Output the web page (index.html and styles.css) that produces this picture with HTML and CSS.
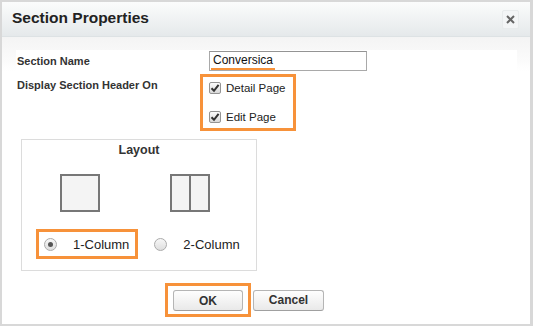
FILE: index.html
```html
<!DOCTYPE html>
<html lang="en">
<head>
    <meta charset="UTF-8">
    <title>Section Properties</title>
    <link rel="stylesheet" href="styles.css">
</head>
<body>
<div class="dialog">
    <div class="dialog-head">
        <h1>Section Properties</h1>
        <div class="close">
            <svg width="9" height="9" viewBox="0 0 9 9"><path d="M1 1L8 8M8 1L1 8" stroke="#666" stroke-width="2"/></svg>
        </div>
    </div>
    <div class="dialog-body">
        <div class="panel">
            <div class="form-row">
                <div class="field-label">Section Name</div>
                <div class="name-box"><span class="name-text">Conversica</span></div>
            </div>
            <div class="form-row second">
                <div class="field-label">Display Section Header On</div>
                <div class="hilite checks">
                    <div class="check-line"><span class="check"><svg width="10" height="10" viewBox="0 0 10 10"><path d="M1.5 5.2L4 7.8L8.6 1.8" stroke="#333" stroke-width="2" fill="none"/></svg></span>Detail Page</div>
                    <div class="check-line"><span class="check"><svg width="10" height="10" viewBox="0 0 10 10"><path d="M1.5 5.2L4 7.8L8.6 1.8" stroke="#333" stroke-width="2" fill="none"/></svg></span>Edit Page</div>
                </div>
            </div>
            <div class="layout-box">
                <div class="layout-title">Layout</div>
                <div class="layout-icons">
                    <div class="col-icon"></div>
                    <div class="col-icon two"><span></span><span></span></div>
                </div>
                <div class="layout-radios">
                    <div class="radio-opt hilite"><span class="radio on"></span>1-Column</div>
                    <div class="radio-opt plain"><span class="radio"></span>2-Column</div>
                </div>
            </div>
            <div class="buttons">
                <div class="hilite ok-wrap"><button class="btn">OK</button></div>
                <button class="btn">Cancel</button>
            </div>
        </div>
    </div>
</div>
</body>
</html>
```

FILE: styles.css
```css
* {
    box-sizing: border-box;
    margin: 0;
    padding: 0;
}

body {
    background: #fff;
    font-family: "Liberation Sans", Arial, sans-serif;
    color: #333;
}

.dialog {
    width: 533px;
    height: 326px;
    border: 2px solid #d8d8d8;
    border-right-width: 3px;
    display: flex;
    flex-direction: column;
}

.dialog-head {
    height: 35px;
    display: flex;
    align-items: center;
    justify-content: space-between;
    padding: 0 11px 3px 10px;
    background: linear-gradient(#fbfcfc, #e5e9eb);
    border-bottom: 1px solid #dde2e4;
}

.dialog-head h1 {
    font-size: 15.5px;
    font-weight: bold;
    color: #222;
}

.close {
    width: 17px;
    height: 19px;
    margin-top: 3px;
    display: flex;
    align-items: center;
    justify-content: center;
    background: #f3f5f6;
    border: 1px solid #e8ebec;
    border-radius: 2px;
}

.dialog-body {
    flex: 1;
    background: linear-gradient(#f4f4f4, #fbfbfb 24px, #fff 34px);
    padding: 13px 13px 0 14px;
}

.panel {
    background: #fff;
    height: 100%;
    padding-top: 1px;
}

.form-row {
    display: grid;
    grid-template-columns: 193px auto;
    align-items: center;
}

.form-row.second {
    margin-top: 3px;
    align-items: start;
}

.field-label {
    font-size: 11px;
    font-weight: bold;
    line-height: 20px;
    padding-left: 1px;
    color: #333;
}

.second .field-label {
    padding-top: 1px;
}

.name-box {
    width: 158px;
    height: 20px;
    border: 1px solid #a9a9a9;
    border-top-color: #949494;
    padding-left: 3px;
    font-size: 12px;
    color: #111;
}

.name-text {
    display: inline-block;
    line-height: 15px;
    padding: 1px 2px 0 2px;
    margin-left: -2px;
    border-bottom: 2px solid #f7923a;
}

.hilite {
    border: 3px solid #f7923a;
}

.checks {
    width: 96px;
    margin-left: -9px;
    padding-left: 6px;
    display: flex;
    flex-direction: column;
    gap: 7px;
}

.check-line {
    display: flex;
    align-items: center;
    height: 22px;
    font-size: 11.5px;
    color: #222;
}

.check {
    width: 12px;
    height: 12px;
    margin-right: 5px;
    border: 1px solid #949494;
    border-radius: 2px;
    background: linear-gradient(#fcfcfc, #d9d9d9);
    display: flex;
    align-items: center;
    justify-content: center;
}

.layout-box {
    width: 236px;
    height: 132px;
    margin: 8px 0 0 5px;
    border: 1px solid #dcdcdc;
}

.layout-title {
    text-align: center;
    font-size: 12.5px;
    font-weight: bold;
    line-height: 20px;
    color: #333;
}

.layout-icons {
    display: flex;
    gap: 70px;
    margin-top: 14px;
    padding-left: 38px;
}

.col-icon {
    width: 40px;
    height: 38px;
    border: 2px solid #777;
    background: #f4f4f4;
}

.col-icon.two {
    display: flex;
}

.col-icon.two span {
    flex: 1;
}

.col-icon.two span:first-child {
    border-right: 2px solid #777;
}

.layout-radios {
    display: flex;
    margin-top: 17px;
    padding-left: 14px;
}

.radio-opt {
    display: flex;
    align-items: center;
    height: 30px;
    font-size: 13px;
    color: #222;
}

.radio-opt.hilite {
    padding: 0 6px 0 5px;
}

.radio-opt.plain {
    margin-left: 16px;
}

.radio {
    width: 13px;
    height: 13px;
    margin-right: 16px;
    border: 1px solid #ababab;
    border-radius: 50%;
    background: linear-gradient(#f7f7f7, #dedede);
    display: flex;
    align-items: center;
    justify-content: center;
}

.radio.on::after {
    content: "";
    width: 5px;
    height: 5px;
    border-radius: 50%;
    background: #555;
}

.buttons {
    display: flex;
    align-items: center;
    margin-top: 12px;
    padding-left: 149px;
}

.ok-wrap {
    padding: 4px 5px 3px 5px;
    margin-right: 2px;
}

.btn {
    width: 71px;
    height: 21px;
    font-family: "Liberation Sans", Arial, sans-serif;
    font-size: 12px;
    font-weight: bold;
    color: #333;
    background: linear-gradient(#fefefe, #e9e9e9);
    border: 1px solid #b5b5b5;
    border-bottom-color: #a0a0a0;
    border-radius: 3px;
}

.ok-wrap .btn {
    width: 70px;
}
```
